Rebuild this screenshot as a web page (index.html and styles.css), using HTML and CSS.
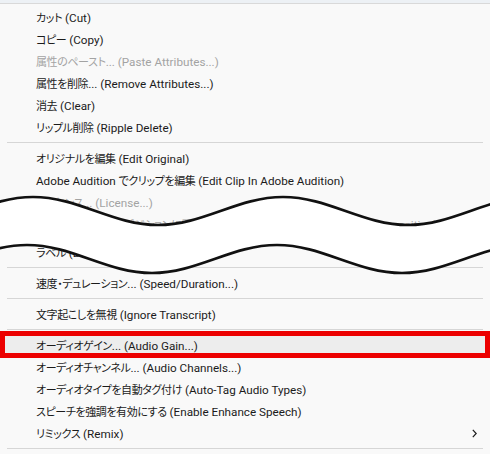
FILE: index.html
```html
<!DOCTYPE html>
<html lang="ja">

<head>
  <meta charset="UTF-8">
  <meta name="viewport" content="width=device-width, initial-scale=1.0">
  <title>Context menu</title>
  <link rel="stylesheet" href="styles.css">
</head>

<body>
  <div class="menu">
    <div class="menu-top"></div>
    <ul class="items">
      <li class="item"><span class="ja">カット</span> (Cut)</li>
      <li class="item"><span class="ja">コピー</span> (Copy)</li>
      <li class="item disabled"><span class="ja">属性のペースト</span>... (Paste Attributes...)</li>
      <li class="item"><span class="ja">属性を削除</span>... (Remove Attributes...)</li>
      <li class="item"><span class="ja">消去</span> (Clear)</li>
      <li class="item"><span class="ja">リップル削除</span> (Ripple Delete)</li>
      <li class="sep"></li>
      <li class="item"><span class="ja">オリジナルを編集</span> (Edit Original)</li>
      <li class="item">Adobe Audition <span class="ja">でクリップを編集</span> (Edit Clip In Adobe Audition)</li>
      <li class="item disabled"><span class="ja">ライセンス</span>... (License...)</li>
      <li class="item disabled">After Effects <span class="ja">コンポジションに置き換え</span> (Replace With After Effects Composition)</li>
      <li class="item after-cut"><span class="ja">ラベル</span> (Label)</li>
      <li class="sep"></li>
      <li class="item"><span class="ja">速度・デュレーション</span>... (Speed/Duration...)</li>
      <li class="sep"></li>
      <li class="item"><span class="ja">文字起こしを無視</span> (Ignore Transcript)</li>
      <li class="sep"></li>
      <li class="item marked"><span class="ja">オーディオゲイン</span>... (Audio Gain...)</li>
      <li class="item"><span class="ja">オーディオチャンネル</span>... (Audio Channels...)</li>
      <li class="item"><span class="ja">オーディオタイプを自動タグ付け</span> (Auto-Tag Audio Types)</li>
      <li class="item"><span class="ja">スピーチを強調を有効にする</span> (Enable Enhance Speech)</li>
      <li class="item submenu">
        <span><span class="ja">リミックス</span> (Remix)</span>
        <svg class="chevron" width="5" height="9" viewBox="0 0 5 9">
          <path d="M0.8 0.8 L4.2 4.5 L0.8 8.2" fill="none" stroke="#1b1b1b" stroke-width="1.2" />
        </svg>
      </li>
      <li class="sep"></li>
    </ul>

    <!-- torn edge: the screenshot was cut here -->
    <svg class="cut" width="490" height="454" viewBox="0 0 490 454">
      <path fill="#fff"
        d="M-92,225 C-46.5,225 -12.5,197 33,197 C78.5,197 112.5,225 158,225 C203.5,225 237.5,197 283,197 C328.5,197 362.5,225 408,225 C453.5,225 487.5,197 533,197
           L527,245 C481.5,245 447.5,273 402,273 C356.5,273 322.5,245 277,245 C231.5,245 197.5,273 152,273 C106.5,273 72.5,245 27,245 C-18.5,245 -52.5,273 -98,273 Z" />
      <path fill="none" stroke="#111" stroke-width="2.6"
        d="M-92,225 C-46.5,225 -12.5,197 33,197 C78.5,197 112.5,225 158,225 C203.5,225 237.5,197 283,197 C328.5,197 362.5,225 408,225 C453.5,225 487.5,197 533,197" />
      <path fill="none" stroke="#111" stroke-width="2.6"
        d="M-98,273 C-52.5,273 -18.5,245 27,245 C72.5,245 106.5,273 152,273 C197.5,273 231.5,245 277,245 C322.5,245 356.5,273 402,273 C447.5,273 481.5,245 527,245" />
    </svg>
  </div>
</body>

</html>
```

FILE: styles.css
```css
* {
  margin: 0;
  padding: 0;
  box-sizing: border-box;
}

body {
  background-color: #f9f9f9;
  font-family: Roboto, "Noto Sans CJK JP", sans-serif;
  font-size: 11.7px;
  color: #1b1b1b;
}

.menu {
  position: relative;
  width: 490px;
  height: 454px;
  overflow: hidden;
}

.menu-top {
  height: 4px;
  background-color: #edf1f5;
  border-bottom: 1px solid #d9d9d9;
}

.items {
  list-style: none;
  padding-top: 2px;
}

.item {
  position: relative;
  height: 22px;
  line-height: 22px;
  padding-left: 36px;
  white-space: nowrap;
}

/* japanese part of each label, narrower like Yu Gothic UI */
.ja {
  font-family: "Noto Sans CJK JP", sans-serif;
  font-size: 11px;
  letter-spacing: -0.4px;
  font-feature-settings: "palt";
}

.item.disabled {
  color: #a3a3a3;
}

.item.after-cut {
  margin-top: 6px;
}

.item.marked {
  background-color: #ededed;
}

.item.marked::after {
  content: "";
  position: absolute;
  left: 0;
  right: 0;
  top: -3px;
  bottom: -2px;
  border: 5px solid #ec0000;
}

.item.submenu {
  display: flex;
  justify-content: space-between;
  align-items: center;
  padding-right: 13px;
}

.sep {
  height: 9px;
  margin: 0 7px;
  display: flex;
  align-items: center;
}

.sep::before {
  content: "";
  flex: 1;
  height: 1px;
  background-color: #d6d6d6;
}

.cut {
  position: absolute;
  top: 0;
  left: 0;
}
```
